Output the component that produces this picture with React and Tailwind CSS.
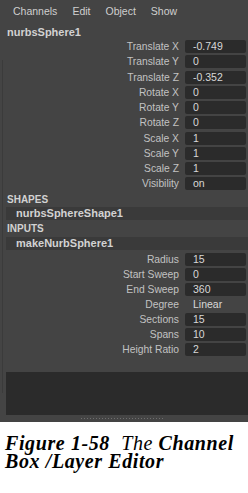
import React from "react";

const ui = { fontFamily: '"Liberation Sans", Arial, sans-serif' };
const serif = { fontFamily: '"Liberation Serif", "Times New Roman", serif' };

const transform = [
  ["Translate X", "-0.749"],
  ["Translate Y", "0"],
  ["Translate Z", "-0.352"],
  ["Rotate X", "0"],
  ["Rotate Y", "0"],
  ["Rotate Z", "0"],
  ["Scale X", "1"],
  ["Scale Y", "1"],
  ["Scale Z", "1"],
  ["Visibility", "on"],
];

const inputs = [
  ["Radius", "15"],
  ["Start Sweep", "0"],
  ["End Sweep", "360"],
  ["Degree", "Linear", true],
  ["Sections", "15"],
  ["Spans", "10"],
  ["Height Ratio", "2"],
];

function Row({ label, value, plain, tall }) {
  return (
    <div className={`flex items-start ${tall ? "h-[15.25px]" : "h-[15px]"}`}>
      <div className="w-[179px] shrink-0 h-[13px] leading-[13px] text-right text-[10.3px] text-[#c2c2c2] whitespace-nowrap">
        {label}
      </div>
      <div
        className={`ml-[6px] w-[61px] h-[13px] leading-[13px] pl-[8px] text-[10.5px] text-[#d8d8d8] rounded-[2px] ${
          plain ? "" : "bg-[#2b2b2b]"
        }`}
      >
        {value}
      </div>
    </div>
  );
}

function Node({ name }) {
  return (
    <div className="ml-[6px] h-[13px] leading-[13px] bg-[#3a3a3a] pl-[10px] text-[11px] font-bold text-[#d2d2d2]">
      {name}
    </div>
  );
}

export default function App() {
  return (
    <div className="w-[248px] h-[493px] bg-white overflow-hidden">
      <div className="relative h-[422px] bg-[#444444] flex flex-col" style={ui}>
        <div className="absolute left-[2px] top-[60px] h-[333px] w-[1px] bg-[#3b3b3b]" />

        <div className="h-[24px] flex items-center pl-[13px] gap-[15px] text-[10.5px] text-[#cfcfcf]">
          <span>Channels</span>
          <span>Edit</span>
          <span>Object</span>
          <span>Show</span>
        </div>

        <div className="h-[16px] leading-[16px] pl-[7px] text-[11px] font-bold text-[#d2d2d2]">
          nurbsSphere1
        </div>

        <div className="flex flex-col">
          {transform.map(([l, v]) => (
            <Row key={l} label={l} value={v} tall />
          ))}
        </div>

        <div className="h-[14px] leading-[14px] pl-[7px] text-[10px] font-bold text-[#d2d2d2]">SHAPES</div>
        <Node name="nurbsSphereShape1" />
        <div className="h-[17px] leading-[17px] pl-[7px] text-[10px] font-bold text-[#d2d2d2]">INPUTS</div>
        <Node name="makeNurbSphere1" />

        <div className="mt-[3.5px] flex flex-col">
          {inputs.map(([l, v, p]) => (
            <Row key={l} label={l} value={v} plain={p} />
          ))}
        </div>

        <div className="mt-[14px] ml-[6px] h-[43px] bg-[#2b2b2b]" />
        <div className="h-[7px] flex items-center justify-center">
          <div className="flex gap-[2px] -ml-[4px]">
            {Array.from({ length: 28 }).map((_, i) => (
              <div key={i} className="w-[1px] h-[1px] bg-[#6e6e6e]" />
            ))}
          </div>
        </div>
      </div>

      <div
        className="pt-[12px] pl-[5px] text-[20px] leading-[18px] tracking-[0.6px] italic text-black"
        style={serif}
      >
        <div>
          <span className="font-bold">Figure 1-58</span>
          <span>{"\u00a0 The "}</span>
          <span className="font-bold">Channel</span>
        </div>
        <div className="font-bold">Box /Layer Editor</div>
      </div>
    </div>
  );
}
